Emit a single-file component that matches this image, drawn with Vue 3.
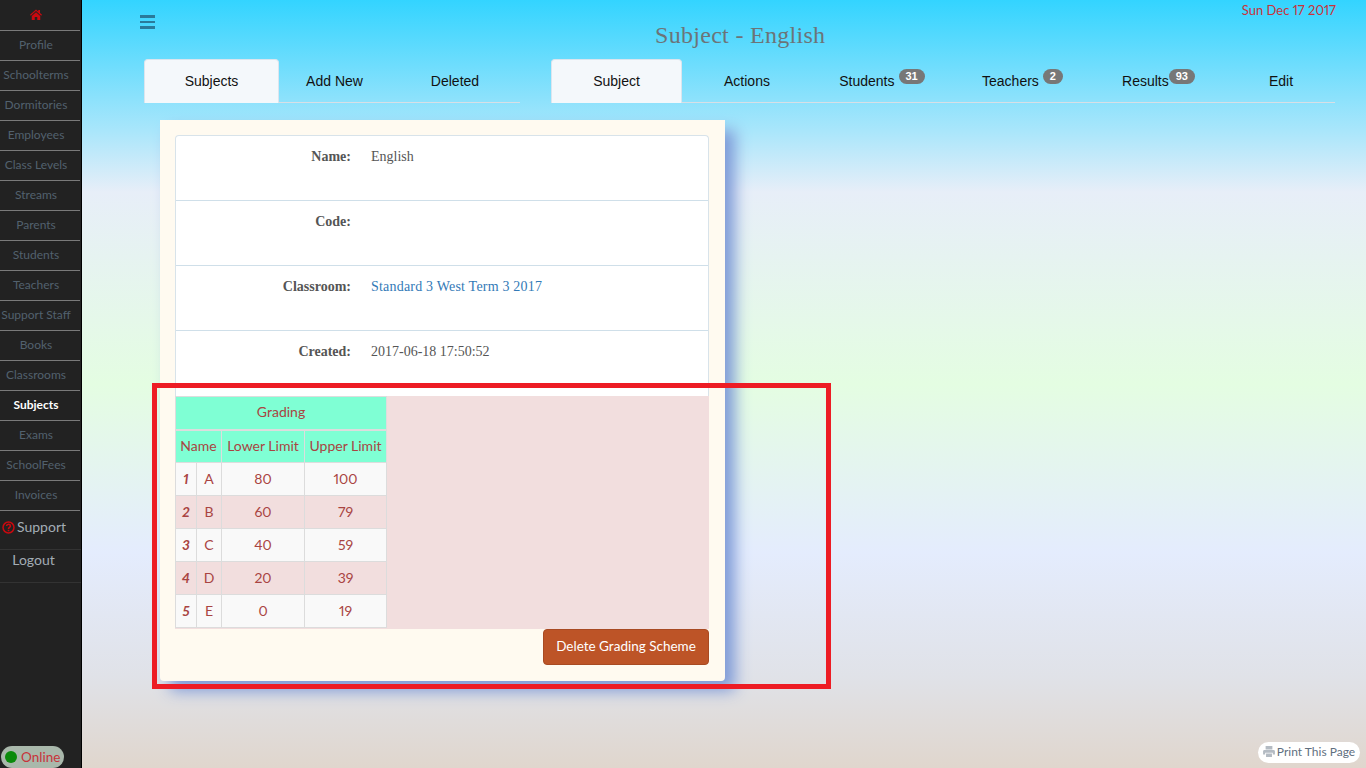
<script setup>
const menu = ['Profile', 'Schoolterms', 'Dormitories', 'Employees', 'Class Levels', 'Streams', 'Parents', 'Students', 'Teachers', 'Support Staff', 'Books', 'Classrooms', 'Subjects', 'Exams', 'SchoolFees', 'Invoices']
const leftTabs = [
  { name: 'Subjects', width: 135, active: true },
  { name: 'Add New', width: 111 },
  { name: 'Deleted', width: 130 }
]
const rightTabs = [
  { name: 'Subject', width: 131, active: true },
  { name: 'Actions', width: 130 },
  { name: 'Students', width: 140, badge: 31 },
  { name: 'Teachers', width: 141, badge: 2 },
  { name: 'Results', width: 131, badge: 93, tight: true },
  { name: 'Edit', width: 111, edit: true }
]
const details = [
  { label: 'Name:', value: 'English' },
  { label: 'Code:', value: '' },
  { label: 'Classroom:', value: 'Standard 3 West Term 3 2017', link: true },
  { label: 'Created:', value: '2017-06-18 17:50:52' }
]
const grades = [
  { name: 'A', lower: 80, upper: 100 },
  { name: 'B', lower: 60, upper: 79 },
  { name: 'C', lower: 40, upper: 59 },
  { name: 'D', lower: 20, upper: 39 },
  { name: 'E', lower: 0, upper: 19 }
]
</script>

<template>
  <div class="page">
    <aside class="sidebar">
      <div class="side-item home">
        <svg width="12" height="11" viewBox="0 0 24 22"><path fill="#c9090f" d="M12 1 0 11.5l1.6 1.8L12 4.2l10.4 9.1 1.6-1.8-4-3.5V2h-3.5v3.2L12 1Zm0 5.6L3.5 14v8h6v-6h5v6h6v-8L12 6.6Z"/></svg>
      </div>
      <div v-for="item in menu" :key="item" class="side-item" :class="{ active: item === 'Subjects' }">{{ item }}</div>
      <div class="side-big support">
        <svg width="13" height="13" viewBox="0 0 14 14"><circle cx="7" cy="7" r="5.9" fill="none" stroke="#c9090f" stroke-width="1.6"/><path fill="none" stroke="#c9090f" stroke-width="1.7" d="M4.9 5.4C5 3 9 3 9.1 5.3 9.2 6.9 7 6.8 7 8.6"/><rect x="6.1" y="9.4" width="1.8" height="1.7" fill="#c9090f"/></svg>
        <span>Support</span>
      </div>
      <div class="side-big logout">Logout</div>
      <div class="online"><i></i>Online</div>
    </aside>

    <main class="main">
      <div class="date">Sun Dec 17 2017</div>
      <header class="top">
        <div class="burger"><i></i><i></i><i></i></div>
        <h1>Subject - English</h1>
      </header>

      <div class="tabs-row">
        <nav class="tabs">
          <a v-for="tab in leftTabs" :key="tab.name" class="tab" :class="{ active: tab.active }" :style="{ width: tab.width + 'px' }">{{ tab.name }}</a>
        </nav>
        <nav class="tabs right">
          <a v-for="tab in rightTabs" :key="tab.name" class="tab" :class="{ active: tab.active, edit: tab.edit }" :style="{ width: tab.width + 'px' }">
            {{ tab.name }}<span v-if="tab.badge" class="badge" :class="{ tight: tab.tight }">{{ tab.badge }}</span>
          </a>
        </nav>
      </div>

      <section class="card">
        <div class="panel">
          <div v-for="row in details" :key="row.label" class="detail">
            <div class="label">{{ row.label }}</div>
            <div class="value" :class="{ link: row.link }">{{ row.value }}</div>
          </div>
        </div>
        <div class="grading">
          <table>
            <colgroup>
              <col class="c-num" /><col class="c-letter" /><col class="c-lower" /><col class="c-upper" />
            </colgroup>
            <thead>
              <tr><th colspan="4">Grading</th></tr>
              <tr>
                <th colspan="2">Name</th>
                <th>Lower Limit</th>
                <th>Upper Limit</th>
              </tr>
            </thead>
            <tbody>
              <tr v-for="(g, i) in grades" :key="g.name">
                <td class="num">{{ i + 1 }}</td>
                <td>{{ g.name }}</td>
                <td>{{ g.lower }}</td>
                <td>{{ g.upper }}</td>
              </tr>
            </tbody>
          </table>
        </div>
        <div class="actions"><button class="delete">Delete Grading Scheme</button></div>
      </section>

      <div class="highlight"></div>
      <div class="print">
        <svg width="12" height="11" viewBox="0 0 14 13"><path fill="#b4bbc3" d="M3 0h8v4H3V0ZM1.500 4.600h11c.8 0 1.500.7 1.500 1.500V10h-2.500V8h-9v2H0V6.100c0-.8.7-1.500 1.500-1.500ZM3.500 9h7v4h-7V9Z"/></svg>
        Print This Page
      </div>
    </main>
  </div>
</template>

<style>
html, body {
  margin: 0;
  height: 100%;
  overflow: hidden;
}
</style>

<style scoped>
.page {
  display: flex;
  width: 1366px;
  height: 768px;
  overflow: hidden;
  font-family: "Lato", sans-serif;
  font-variant-numeric: proportional-nums;
}
.sidebar {
  position: relative;
  width: 82px;
  height: 768px;
  flex: none;
  box-sizing: border-box;
  background: #222;
  border-right: 1px solid #000;
}
.side-item {
  height: 30px;
  box-sizing: border-box;
  border-bottom: 1px solid #7a7a7a;
  margin-right: 1px;
  padding: 0 8px 2px 0;
  display: flex;
  align-items: center;
  justify-content: center;
  font-size: 12px;
  color: #52616e;
  white-space: nowrap;
}
.side-item.active {
  color: #fff;
  font-weight: 700;
}
.home {
  height: 31px;
}
.side-big {
  height: 33px;
  box-sizing: border-box;
  border-bottom: 1px solid #333;
  color: #a3adb5;
  font-size: 14px;
  display: flex;
  gap: 2px;
  padding-top: 1px;
}
.support {
  height: 39px;
  padding: 7px 0 0 2px;
  gap: 2px;
}
.support svg {
  margin-top: 3px;
}
.logout {
  justify-content: center;
  padding-right: 14px;
}
.online {
  position: absolute;
  left: 1px;
  bottom: 0;
  width: 63px;
  height: 22px;
  box-sizing: border-box;
  border-radius: 11px;
  background: #a9b8ab;
  color: #c8333a;
  font-size: 13.500px;
  display: flex;
  align-items: center;
  gap: 4px;
  padding: 0 0 1px 4px;
}
.online i {
  width: 12px;
  height: 12px;
  border-radius: 50%;
  background: #0b8a0b;
}
.main {
  position: relative;
  flex: 1;
  height: 768px;
  box-sizing: border-box;
  padding-left: 62px;
  background: linear-gradient(to bottom, #33d4ff 0%, #a9e6fb 17%, #e7eef8 25%, #e4fde2 50%, #e4ecfd 72%, #e0e2e8 88%, #e0d6cd 100%);
}
.date {
  position: absolute;
  top: 2px;
  right: 30px;
  font-size: 13px;
  color: #c8333a;
}
.top {
  position: relative;
  height: 59px;
}
.burger {
  position: absolute;
  left: -4px;
  top: 15px;
  width: 15px;
  display: flex;
  flex-direction: column;
  gap: 3px;
}
.burger i {
  display: block;
  height: 2.500px;
  background: #2a7a9a;
}
h1 {
  margin: 0;
  padding: 21px 0 0 511px;
  font-family: "Liberation Serif", serif;
  font-weight: 400;
  font-size: 24px;
  letter-spacing: 0.3px;
  line-height: 28px;
  color: #6c7478;
  white-space: nowrap;
}
.tabs-row {
  display: flex;
  gap: 31px;
}
.tabs {
  display: flex;
  height: 44px;
  box-sizing: border-box;
  border-bottom: 1px solid #d8dfe6;
}
.tab {
  position: relative;
  display: flex;
  align-items: center;
  justify-content: center;
  height: 43px;
  box-sizing: border-box;
  font-family: "Liberation Sans", sans-serif;
  font-size: 14px;
  color: #111;
  white-space: nowrap;
}
.tab.active {
  height: 44px;
  padding-bottom: 1px;
  background: #f4f8fb;
  border: 1px solid #dbe5ee;
  border-bottom: none;
  border-radius: 4px 4px 0 0;
}
.tab.edit {
  padding-left: 3px;
}
.badge {
  display: inline-block;
  margin: -8px 0 0 4px;
  height: 15px;
  line-height: 15px;
  padding: 0 7px;
  border-radius: 8px;
  background: #777;
  color: #fff;
  font-size: 11px;
  font-weight: 700;
  text-align: center;
}
.badge.tight {
  margin-left: 0;
}
.card {
  width: 565px;
  height: 561px;
  box-sizing: border-box;
  margin: 17px 0 0 16px;
  padding: 15px 16px 0 15px;
  background: #fffaf0;
  border-radius: 0 0 4px 4px;
  box-shadow: 10px 10px 15px #7f9bd8;
}
.panel {
  background: #fff;
  border: 1px solid #d8e3ea;
  border-bottom: none;
  border-radius: 4px 4px 0 0;
}
.detail {
  display: flex;
  height: 65px;
  box-sizing: border-box;
  padding-top: 13px;
  font-family: "Liberation Serif", serif;
  font-size: 14px;
  color: #555;
  border-bottom: 1px solid #cfdfe9;
}
.detail:last-child {
  border-bottom: none;
}
.label {
  width: 175px;
  text-align: right;
  font-weight: 700;
}
.value {
  padding-left: 20px;
}
.link {
  color: #337ab7;
  letter-spacing: 0.2px;
}
.grading {
  height: 233px;
  background: #f2dede;
}
table {
  border-collapse: collapse;
  width: 211px;
  font-size: 14px;
  color: #a94442;
  table-layout: fixed;
}
th, td {
  border: 1px solid #ddd;
  padding: 0 0 2px;
  text-align: center;
  box-sizing: border-box;
  height: 33px;
  white-space: nowrap;
}
th {
  background: #7fffd4;
  font-weight: 400;
}
thead tr + tr th {
  border-top: 2px solid #ddd;
}
tbody td {
  border-color: #dcdcdc;
}
tbody tr:nth-child(odd) td {
  background: #f9f9f9;
}
.c-num {
  width: 21px;
}
.c-letter {
  width: 25px;
}
.c-lower {
  width: 83px;
}
.c-upper {
  width: 82px;
}
.num {
  font-weight: 700;
  font-style: italic;
}
.actions {
  display: flex;
  justify-content: flex-end;
}
.delete {
  width: 166px;
  height: 36px;
  padding: 0 0 3px;
  background: #bd5427;
  border: 1px solid #a84a22;
  border-radius: 4px;
  color: #fff;
  font-family: "Lato", sans-serif;
  font-size: 13.500px;
}
.highlight {
  position: absolute;
  left: 70px;
  top: 383px;
  width: 679px;
  height: 306px;
  box-sizing: border-box;
  border: 5px solid #ed1c24;
  pointer-events: none;
}
.print {
  position: absolute;
  right: 6px;
  bottom: 5px;
  height: 21px;
  width: 102px;
  box-sizing: border-box;
  border-radius: 11px;
  padding-bottom: 3px;
  background: #fff;
  display: flex;
  align-items: center;
  justify-content: center;
  gap: 2px;
  font-size: 12px;
  color: #5f6f80;
  white-space: nowrap;
}
</style>
